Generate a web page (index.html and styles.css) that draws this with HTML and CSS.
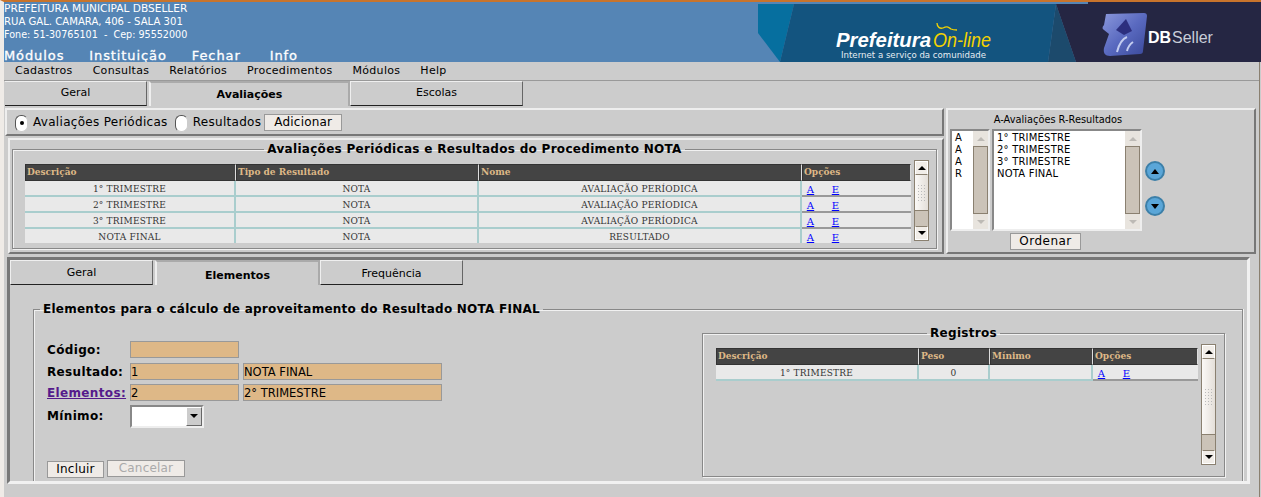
FILE: index.html
```html
<!DOCTYPE html>
<html lang="pt-BR">
<head>
<meta charset="utf-8">
<title>Prefeitura On-line</title>
<link rel="stylesheet" href="styles.css">
</head>
<body>
<div class="page">
<header class="top">
  <div class="inst">
    <div class="inst-lines">
      <div class="l1">PREFEITURA MUNICIPAL DBSELLER</div>
      <div class="l2">RUA GAL. CAMARA, 406 - SALA 301</div>
      <div class="l3">Fone: 51-30765101 &nbsp;- &nbsp;Cep: 95552000</div>
    </div>
    <nav class="topnav"><span>Módulos</span><span>Instituição</span><span>Fechar</span><span class="nav-info">Info</span></nav>
  </div>
  <svg class="banner" width="504" height="60" viewBox="0 0 504 60">
    <defs>
      <linearGradient id="cube" x1="0" y1="0" x2="1" y2="1"><stop offset="0" stop-color="#8b98dc"/><stop offset=".5" stop-color="#5a6ac0"/><stop offset="1" stop-color="#39489a"/></linearGradient>
    </defs>
    <rect width="504" height="60" fill="#5585b5"/>
    <polygon points="1,2 37,2 23,60 1,31" fill="#066f9f"/>
    <polygon points="37,2 299,2 291,60 23,60" fill="#13547f"/>
    <polygon points="299,2 319,60 291,60" fill="#1c4a6c"/>
    <polygon points="299,2 331,2 331,0 504,0 504,60 319,60" fill="#252643"/>
    <text x="79" y="45" class="b-pref" textLength="95" lengthAdjust="spacingAndGlyphs">Prefeitura</text>
    <text x="176" y="45" class="b-on" textLength="58" lengthAdjust="spacingAndGlyphs">On-line</text>
    <path d="M180 21c0 4 3 6 6 5 4-2 5-1 8 1 2 1 4 1 6 1" fill="none" stroke="#f2d200" stroke-width="1.3"/>
    <text x="84" y="56" class="b-sub" textLength="145">Internet a serviço da comunidade</text>
    <path d="M349 12l38-1c2 0 3 1 3 3l-4 35c0 2-1 3-3 3l-30 2c-5 0-7-3-6-8l5-14-5-4c-2-1-2-3 0-5z" fill="url(#cube)"/>
    <path d="M369 17l-10 11 8 5 8-4z" fill="#2c2f7e"/>
    <path d="M360 50c2-8 5-13 10-15M370 49c1-4 3-7 6-9" stroke="#c4cdf0" stroke-width="2" fill="none"/>
    <text x="391" y="41" class="b-db">DB</text><text x="415" y="41" class="b-seller">Seller</text>
  </svg>
</header>
<div class="content">
<div class="menubar"><span>Cadastros</span><span>Consultas</span><span>Relatórios</span><span>Procedimentos</span><span>Módulos</span><span>Help</span></div>
<div class="tabs tabs-main">
  <div class="tab t-geral">Geral</div>
  <div class="tab active t-aval">Avaliações</div>
  <div class="tab t-esc">Escolas</div>
</div>
<div class="upper">
  <div class="upper-left">
    <div class="choice raised">
      <span class="radio on"></span><label>Avaliações Periódicas</label>
      <span class="radio"></span><label>Resultados</label>
      <button class="btn">Adicionar</button>
    </div>
    <div class="listing raised">
      <fieldset class="fs">
        <legend>Avaliações Periódicas e Resultados do Procedimento NOTA</legend>
        <div class="grid-wrap">
          <div class="clip clip-top">
            <table class="data">
              <colgroup><col class="c1"><col class="c2"><col class="c3"><col class="c4"></colgroup>
              <thead><tr><th>Descrição</th><th>Tipo de Resultado</th><th>Nome</th><th>Opções</th></tr></thead>
              <tbody>
                <tr><td>1° TRIMESTRE</td><td>NOTA</td><td>AVALIAÇÃO PERÍODICA</td><td class="opt"><a href="#">A</a><a href="#">E</a></td></tr>
                <tr><td>2° TRIMESTRE</td><td>NOTA</td><td>AVALIAÇÃO PERÍODICA</td><td class="opt"><a href="#">A</a><a href="#">E</a></td></tr>
                <tr><td>3° TRIMESTRE</td><td>NOTA</td><td>AVALIAÇÃO PERÍODICA</td><td class="opt"><a href="#">A</a><a href="#">E</a></td></tr>
                <tr><td>NOTA FINAL</td><td>NOTA</td><td>RESULTADO</td><td class="opt"><a href="#">A</a><a href="#">E</a></td></tr>
              </tbody>
            </table>
          </div>
          <div class="sb sb-top">
            <div class="sb-btn up"></div>
            <div class="thumb"><i></i></div>
            <div class="track"></div>
            <div class="sb-btn down"></div>
          </div>
        </div>
      </fieldset>
    </div>
  </div>
  <aside class="order raised">
    <div class="order-title">A-Avaliações R-Resultados</div>
    <div class="order-body">
      <div class="listbox lb-a">
        <div class="lb-text"><div>A</div><div>A</div><div>A</div><div>R</div></div>
        <div class="lb-sb"><div class="lb-arrow up"></div><div class="lb-track"></div><div class="lb-arrow down"></div></div>
      </div>
      <div class="listbox lb-b">
        <div class="lb-text"><div>1° TRIMESTRE</div><div>2° TRIMESTRE</div><div>3° TRIMESTRE</div><div>NOTA FINAL</div></div>
        <div class="lb-sb"><div class="lb-arrow up"></div><div class="lb-track"></div><div class="lb-arrow down"></div></div>
      </div>
      <div class="movers">
        <span class="mover"><i class="tri-up"></i></span>
        <span class="mover"><i class="tri-down"></i></span>
      </div>
    </div>
    <button class="btn btn-order">Ordenar</button>
  </aside>
</div>
<section class="lower">
  <div class="tabs tabs-sub">
    <div class="tab t2-geral">Geral</div>
    <div class="tab active t2-el">Elementos</div>
    <div class="tab t2-fr">Frequência</div>
  </div>
  <fieldset class="fs fs-main">
    <legend>Elementos para o cálculo de aproveitamento do Resultado NOTA FINAL</legend>
    <div class="main-cols">
      <form class="form">
        <div class="frow"><label>Código:</label><input class="in in-s" type="text" readonly></div>
        <div class="frow frow-gap"><label>Resultado:</label><input class="in in-s" type="text" value="1" readonly><input class="in in-l" type="text" value="NOTA FINAL" readonly></div>
        <div class="frow"><a class="flink" href="#">Elementos:</a><input class="in in-s" type="text" value="2" readonly><input class="in in-l" type="text" value="2° TRIMESTRE" readonly></div>
        <div class="frow frow-sel"><label>Mínimo:</label><span class="sel"><i></i></span></div>
        <div class="fbtns"><button class="btn b-inc" type="button">Incluir</button><button class="btn b-can off" type="button" disabled>Cancelar</button></div>
      </form>
      <fieldset class="fs fs-reg">
        <legend>Registros</legend>
        <div class="grid-wrap">
          <div class="clip-reg">
            <table class="data data-reg">
              <colgroup><col class="r1"><col class="r2"><col class="r3"><col class="r4"></colgroup>
              <thead><tr><th>Descrição</th><th>Peso</th><th>Mínimo</th><th>Opções</th></tr></thead>
              <tbody><tr><td>1° TRIMESTRE</td><td>0</td><td></td><td class="opt"><a href="#">A</a><a href="#">E</a></td></tr></tbody>
            </table>
          </div>
          <div class="sb sb-reg">
            <div class="sb-btn up"></div>
            <div class="thumb"><i></i></div>
            <div class="track"></div>
            <div class="sb-btn down"></div>
          </div>
        </div>
      </fieldset>
    </div>
  </fieldset>
</section>
</div>
</div>
</body>
</html>
```
FILE: styles.css
```css
* { box-sizing: border-box; }
html, body { margin: 0; height: 497px; overflow: hidden; }
body { background: #cccccc; font-family: "DejaVu Sans", sans-serif; font-size: 11px; color: #000; }
.page { width: 1261px; height: 497px; background: #cccccc; border-left: 4px solid #efebe7; border-top: 2px solid #c8742c; overflow: hidden; }
.content { height: 435px; border-right: 1px solid #8a8070; margin-right: 1px; }

.top { display: flex; justify-content: space-between; height: 60px; background: #5585b5; color: #fff; overflow: hidden; }
.inst { display: flex; flex-direction: column; }
.inst-lines { line-height: 13px; white-space: nowrap; }
.l1 { font-size: 10.6px; }
.l2 { font-size: 10.1px; }
.l3 { font-size: 9.6px; }
.topnav { display: flex; gap: 25px; margin-top: 8px; font-size: 13px; font-weight: 500; letter-spacing: .9px; line-height: 14px; -webkit-text-stroke: .3px #fff; }
.nav-info { margin-left: 4px; }
.banner { display: block; flex: none; }
.b-pref { font: italic bold 20px "Liberation Sans", sans-serif; fill: #fff; }
.b-on { font: italic 21px "Liberation Sans", sans-serif; fill: #f2d200; }
.b-sub { font: 8.6px "DejaVu Sans", sans-serif; fill: #e6edf2; }
.b-db { font: bold 16px "Liberation Sans", sans-serif; fill: #fff; }
.b-seller { font: 16px "Liberation Sans", sans-serif; fill: #c8cdd8; }

.menubar { display: flex; gap: 20px; height: 19px; padding: 2px 0 0 11px; border-bottom: 1px solid #999; line-height: 14px; letter-spacing: .3px; }

.tabs { display: flex; }
.tab { display: flex; align-items: center; justify-content: center; background: #ccc; border-right: 1px solid #666; border-bottom: 1px solid #222; border-top: 1px solid #efefef; border-left: 1px solid #efefef; padding-bottom: 2px; }
.tab.active { background: #ccc; font-weight: bold; border: 0; border-left: 2px solid #eee; border-right: 2px solid #aaa; border-top: 2px solid #aaa; padding: 0; margin-left: 2px; }
.tabs-main { height: 25px; margin-left: 1px; }
.t-geral { width: 142px; border-left: 0; }
.t-aval { width: 201px; }
.t-esc { width: 173px; }

.upper { display: flex; height: 149px; padding-top: 2px; }
.raised { background: #ccc; border: 2px solid #777; border-top-color: #eee; border-left-color: #eee; }
.upper-left { width: 939px; margin-left: 1px; display: flex; flex-direction: column; gap: 2px; }
.choice { display: flex; align-items: center; height: 28px; padding: 0 0 0 8px; font-size: 12px; letter-spacing: .3px; }
.choice label { margin: 0 7px 0 5px; }
.choice label + .btn { margin-left: -4px; }
.radio { width: 13px; height: 17px; border-radius: 6px; background: #fff; border: 1px solid #555; border-right-color: #ccc; border-bottom-color: #ccc; display: flex; align-items: center; justify-content: center; margin-top: 2px; }
.radio.on::after { content: ""; width: 4px; height: 4px; border-radius: 50%; background: #000; }
.btn { font: 12px "DejaVu Sans", sans-serif; background: #efebe7; color: #000; border: 1px solid #999; padding: 0 9px; height: 17px; line-height: 15px; letter-spacing: .2px; }
.btn.off { color: #aaa; }

.listing { margin-left: 3px; height: 116px; padding: 2px 2px 3px 2px; }
.fs { margin: 0; padding: 0; border: 1px solid #888; box-shadow: inset 1px 1px 0 #f1f1f1, 1px 1px 0 #f1f1f1; }
.fs legend { padding: 0 3px; font-weight: bold; font-size: 12px; letter-spacing: .3px; line-height: 14px; }
.listing .fs { width: 925px; height: 107px; padding: 0; margin-top: 0; }
.listing .fs legend { margin: 0 auto; }
.listing .grid-wrap { padding: 8px 0 0 12px; }
.grid-wrap { display: flex; gap: 3px; }
.clip { overflow: hidden; }
.clip-top { width: 886px; height: 79px; }
.data { border-collapse: separate; border-spacing: 0; table-layout: fixed; font: 9px "DejaVu Serif", serif; color: #333; width: 100%; letter-spacing: .2px; }
.data th { background: #444; color: #deb887; font-weight: bold; text-align: left; height: 17px; padding: 0 1px 2px; border: 1px solid #333; border-right-color: #ddd; font-size: 9px; white-space: nowrap; letter-spacing: 0; }
.data td { background: #e9e9e9; height: 16px; text-align: center; padding: 2px 0 0; border-bottom: 2px solid #a9cdcd; border-right: 2px solid #a9cdcd; white-space: nowrap; }
.data td.opt { text-align: left; padding-left: 2px; border-right: 0; border-bottom-color: #999; }
.opt a { color: #00f; display: inline-block; width: 13px; text-align: center; margin-right: 12px; font-size: 10px; }
.c1 { width: 211px; } .c2 { width: 243px; } .c3 { width: 323px; } .c4 { width: 109px; }

.sb { width: 15px; display: flex; flex-direction: column; flex: none; border: 1px solid #8a8070; background: #cbc3b8; }
.sb-top { height: 81px; margin-top: -4px; }
.sb-btn { height: 14px; flex: none; background: #f1ede8; display: flex; align-items: center; justify-content: center; border: 1px solid #fff; border-bottom-color: #8a8070; }
.sb-btn.down { border-bottom-color: #fff; border-top-color: #8a8070; }
.sb-btn::after { content: ""; border: 4px solid transparent; }
.sb-btn.up::after { border-top: 0; border-bottom: 4px solid #000; }
.sb-btn.down::after { border-bottom: 0; border-top: 4px solid #000; }
.thumb { flex: 1; background: linear-gradient(90deg, #fbf9f7, #e4dfd9); display: flex; align-items: center; justify-content: center; border-bottom: 1px solid #8a8070; }
.thumb i { width: 9px; height: 18px; background: radial-gradient(circle, #bbb 0.7px, transparent 1px) 0 0 / 3px 3px; }
.track { flex: none; height: 15px; background: #cbc3b8; }

.order { width: 310px; margin-left: 2px; height: 146px; padding: 3px 0 0 2px; display: flex; flex-direction: column; align-items: flex-start; }
.order-title { width: 216px; text-align: center; font-size: 9.8px; line-height: 14px; }
.order-body { display: flex; margin-top: 2px; gap: 2px; }
.listbox { display: flex; height: 102px; background: #fff; border: 2px solid #888; border-right-color: #eee; border-bottom-color: #eee; font-size: 10px; line-height: 12px; }
.lb-a { width: 40px; }
.lb-b { width: 150px; }
.lb-text { flex: 1; padding: 1px 0 0 3px; letter-spacing: .2px; }
.lb-sb { width: 15px; flex: none; display: flex; flex-direction: column; }
.lb-track { flex: 1; background: #cbc3b8; border: 1px solid #8a8070; }
.lb-arrow { height: 15px; background: #e8e4de; display: flex; align-items: center; justify-content: center; }
.lb-arrow::after { content: ""; border: 4px solid transparent; }
.lb-arrow.up::after { border-top: 0; border-bottom: 4px solid #bdbab5; }
.lb-arrow.down::after { border-bottom: 0; border-top: 4px solid #bdbab5; }
.movers { display: flex; flex-direction: column; gap: 15px; margin: 32px 0 0 1px; }
.mover { width: 20px; height: 20px; border-radius: 50%; background: #5aa6d8; border: 2px solid #3c7fa8; display: flex; align-items: center; justify-content: center; }
.mover i { border: 4px solid transparent; }
.tri-up { border-top: 0 !important; border-bottom: 5px solid #000 !important; }
.tri-down { border-bottom: 0 !important; border-top: 5px solid #000 !important; }
.btn-order { margin: 2px 0 0 60px; width: 71px; padding: 0; letter-spacing: .5px; }

.lower { margin: 2px 9px 0 3px; height: 227px; border: 3px solid #777; border-right-color: #f1f1f1; border-bottom-color: #f1f1f1; padding: 0; }
.tabs-sub { height: 25px; }
.tabs-sub .tab.active { padding-top: 4px; }
.tabs-sub .t2-geral { padding-bottom: 0; }
.tabs-sub .t2-fr { padding: 2px 0 0; }
.t2-geral { width: 143px; border-left: 1px solid #efefef; }
.t2-el { width: 165px; }
.t2-fr { width: 143px; }
.fs-main { margin: 17px 4px 0 23px; height: 179px; padding: 0; border-bottom: 0; box-shadow: inset 1px 1px 0 #f1f1f1, 1px 0 0 #f1f1f1; }
.fs-main > legend { margin-left: 6px; padding: 0 3px; letter-spacing: .25px; }
.main-cols { display: flex; justify-content: space-between; }
.form { width: 500px; padding: 23px 0 0 13px; }
.frow { display: flex; align-items: center; height: 21px; gap: 4px; }
.frow-gap { margin-top: 1px; }
.frow label, .flink { width: 79px; flex: none; font-weight: bold; font-size: 12px; letter-spacing: .35px; margin-right: 0; white-space: nowrap; }
.flink { color: #551a8b; }
.in { height: 17px; border: 1px solid #999; background: #deb887; font: 11.5px "DejaVu Sans", sans-serif; padding: 1px 0 0 0; color: #000; outline: 0; margin: 0; }
.in-s { width: 109px; }
.in-l { width: 199px; }
.frow-sel { height: 26px; }
.sel { width: 74px; height: 23px; background: #fff; border: 2px solid #888; border-right-color: #eee; border-bottom-color: #eee; display: flex; justify-content: flex-end; }
.sel i { width: 16px; background: #ccc; border: 1px solid #fff; border-right-color: #666; border-bottom-color: #666; display: flex; align-items: center; justify-content: center; }
.sel i::after { content: ""; border: 4px solid transparent; border-bottom: 0; border-top: 4px solid #000; }
.fbtns { display: flex; gap: 3px; margin-top: 31px; align-items: flex-start; }
.b-inc { width: 57px; padding: 0; margin-top: 1px; }
.b-can { width: 78px; padding: 0; }
.fs-reg { width: 523px; height: 151px; margin: 10px 17px 0 0; padding: 0; }
.fs-reg legend { margin: 0 auto; }
.fs-reg .grid-wrap { padding: 8px 0 0 13px; }
.clip-reg { width: 482px; height: 34px; overflow: hidden; }
.r1 { width: 203px; } .r2 { width: 71px; } .r3 { width: 103px; } .r4 { width: 105px; }
.sb-reg { height: 121px; margin-top: -4px; }
```
